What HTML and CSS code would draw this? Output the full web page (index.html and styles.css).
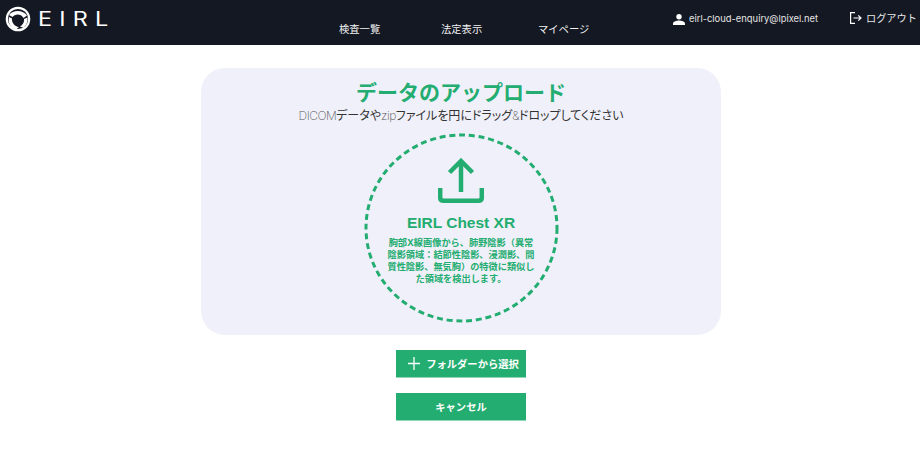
FILE: index.html
```html
<!DOCTYPE html>
<html lang="ja">
<head>
<meta charset="utf-8">
<title>EIRL</title>
<link rel="stylesheet" href="styles.css">
</head>
<body>
<header class="topbar">
  <div class="brand">
    <svg class="brand-mark" width="26" height="26" viewBox="0 0 26 26">
      <circle cx="13" cy="13" r="11.200" fill="none" stroke="#fff" stroke-width="2.200"/>
      <path d="M4 9 C8 3.500 18 3.500 22 9.500 L18.500 12 C16 7.500 10 7.500 7.500 11 Z" fill="#fff"/>
      <path d="M7 12.500 C6.500 16.500 9.500 20.500 14 21 L11 23.500 C6 22.500 2.500 17 4 11 Z" fill="#fff"/>
      <path d="M19 13 C19.500 16.500 17 19.500 15 20.500 L18.500 22 C21.500 19.500 23 15.500 22.500 11.500 Z" fill="#fff"/>
    </svg>
    <span class="brand-name">EIRL</span>
  </div>
  <nav class="nav">
    <a class="nav-link">検査一覧</a>
    <a class="nav-link">法定表示</a>
    <a class="nav-link">マイページ</a>
  </nav>
  <div class="account">
    <svg class="user-icon" width="12" height="11" viewBox="0 0 12 11"><circle cx="6" cy="2.800" r="2.700" fill="#fff"/><path d="M0 11 V9.500 C0 7.600 3.500 6.600 6 6.600 S12 7.600 12 9.500 V11 Z" fill="#fff"/></svg>
    <span class="email">eirl-cloud-enquiry@lpixel.net</span>
  </div>
  <div class="logout">
    <svg width="12" height="12" viewBox="0 0 12 12" fill="none" stroke="#fff" stroke-width="1.200"><path d="M5 .6 H.6 V11.400 H5"/><path d="M3.500 6 H11 M8.300 3.300 L11 6 L8.300 8.700"/></svg>
    <span>ログアウト</span>
  </div>
</header>
<main class="page">
  <section class="panel">
    <h1 class="panel-title">データのアップロード</h1>
    <p class="panel-sub"><span class="thin">DICOM</span>データや<span class="thin">zip</span>ファイルを円にドラッグ<span class="thin">&amp;</span>ドロップしてください</p>
    <div class="drop">
      <svg class="drop-ring" width="195" height="190" viewBox="0 0 195 190">
        <ellipse cx="97.500" cy="95" rx="95.500" ry="93" fill="none" stroke="#23ad70" stroke-width="3" stroke-dasharray="6 3.800"/>
      </svg>
      <svg class="upload-icon" width="46" height="46" viewBox="0 0 46 46" fill="none" stroke="#23ad70" stroke-width="4.500">
        <path d="M23 34 V3"/>
        <path d="M11.500 14.500 L23 3 L34.500 14.500"/>
        <path d="M2.200 30 V39.500 Q2.200 42.800 5.500 42.800 H40.500 Q43.800 42.800 43.800 39.500 V30"/>
      </svg>
      <h2 class="drop-title">EIRL Chest XR</h2>
      <p class="drop-text">胸部X線画像から、肺野陰影（異常陰影領域：結節性陰影、浸潤影、間質性陰影、無気胸）の特徴に類似した領域を検出します。</p>
    </div>
  </section>
  <button class="btn btn-plus"><svg width="12" height="13" viewBox="0 0 12 13" stroke="#fff" stroke-width="1.300"><path d="M6 0 V13 M0 6.500 H12"/></svg><span>フォルダーから選択</span></button>
  <button class="btn">キャンセル</button>
</main>
</body>
</html>
```
FILE: styles.css
```css
* { box-sizing: border-box; }
html, body { margin: 0; padding: 0; }
body {
  background: #fff;
  font-family: "Inter", "Noto Sans CJK JP", sans-serif;
  overflow: hidden;
}
.topbar {
  height: 45px;
  background: #141823;
  color: #fff;
  display: flex;
  align-items: flex-start;
}
.brand {
  display: flex;
  align-items: center;
  gap: 7px;
  padding: 6px 0 0 5px;
  width: 339px;
}
.brand-name {
  font-family: "Inter", sans-serif;
  font-weight: 400;
  font-size: 19.500px;
  line-height: 26px;
  letter-spacing: 6px;
  transform: scaleX(1.200);
  transform-origin: left center;
}
.nav {
  display: grid;
  grid-template-columns: 102px 97px auto;
  padding-top: 21px;
  width: 334px;
}
.nav-link {
  font-size: 10.300px;
  line-height: 16px;
  color: #f2f2f2;
}
.account {
  display: flex;
  align-items: center;
  gap: 4px;
  padding-top: 13px;
  width: 177px;
}
.email { font-size: 9.400px; line-height: 12px; color: #e4e4e4; }
.logout {
  display: flex;
  align-items: center;
  gap: 4px;
  padding-top: 10px;
  font-size: 10.200px;
  line-height: 16px;
  color: #e8e8e8;
  white-space: nowrap;
}
.page {
  display: flex;
  flex-direction: column;
  align-items: center;
  padding-left: 2px;
}
.panel {
  width: 520px;
  height: 267px;
  margin-top: 23px;
  background: #f0f0fa;
  border-radius: 24px;
  display: flex;
  flex-direction: column;
  align-items: center;
  padding-top: 11px;
}
.panel-title {
  margin: 0;
  font-size: 21px;
  line-height: 28px;
  font-weight: 600;
  color: #23ad70;
}
.panel-sub {
  margin: 1px 0 0;
  font-size: 12px;
  line-height: 16px;
  color: #333;
  font-feature-settings: "palt";
}
.thin { font-weight: 200; color: #555; letter-spacing: -0.500px; }
.drop {
  position: relative;
  width: 195px;
  height: 190px;
  margin-top: 9px;
  display: flex;
  flex-direction: column;
  align-items: center;
  padding-top: 25px;
}
.drop-ring { position: absolute; left: 0; top: 0; }
.drop-title {
  margin: 9px 0 0;
  font-family: "Liberation Sans", sans-serif;
  font-size: 15.500px;
  line-height: 20px;
  font-weight: 700;
  color: #23ad70;
}
.drop-text {
  margin: 4px 0 0;
  width: 150px;
  font-size: 9.200px;
  line-height: 12px;
  font-weight: 700;
  color: #23ad70;
  text-align: center;
}
.btn {
  width: 130px;
  height: 28px;
  margin-top: 15px;
  border: 0;
  border-bottom: 1px solid #8fd8b8;
  border-radius: 0;
  background: #23ad70;
  color: #fff;
  font-family: inherit;
  font-size: 10.300px;
  font-weight: 700;
  display: flex;
  align-items: center;
  justify-content: center;
  gap: 6px;
  padding: 0;
}
.btn-plus { padding-left: 5px; }
```
